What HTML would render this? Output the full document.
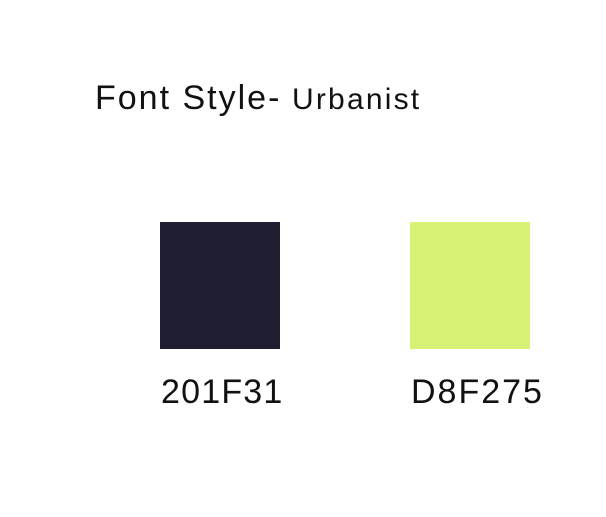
<!DOCTYPE html>
<html><head><style>
body{margin:0;width:606px;height:517px;background:#fff;position:relative;overflow:hidden;font-family:"Liberation Sans",sans-serif;color:#111}
.t{position:absolute;white-space:nowrap}
.sq{position:absolute;top:222px;width:120px;height:127px}
</style></head><body>
<div class="t" style="left:95px;top:78px;font-size:34px;line-height:40px;letter-spacing:2px">Font Style-</div>
<div class="t" style="left:292px;top:80px;font-size:30px;line-height:40px;letter-spacing:2.2px">Urbanist</div>
<div class="sq" style="left:160px;background:#201F31"></div>
<div class="sq" style="left:410px;background:#D8F275"></div>
<div class="t" style="left:161px;top:372px;font-size:34px;line-height:40px;letter-spacing:1.2px">201F31</div>
<div class="t" style="left:411px;top:372px;font-size:34px;line-height:40px;letter-spacing:2px">D8F275</div>
</body></html>
